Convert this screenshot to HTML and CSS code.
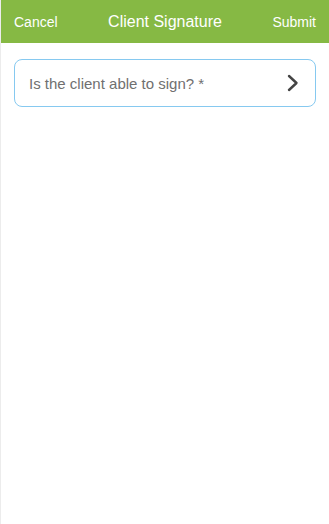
FILE: index.html
```html
<!DOCTYPE html>
<html>
<head>
<meta charset="utf-8">
<link rel="stylesheet" href="styles.css">
</head>
<body>
<div class="app">
  <header class="topbar">
    <span class="action">Cancel</span>
    <span class="title">Client Signature</span>
    <span class="action">Submit</span>
  </header>
  <main class="content">
    <div class="field">
      <span class="label">Is the client able to sign? *</span>
      <svg class="chev" width="12" height="18" viewBox="0 0 12 18"><path d="M2 2 L9.5 9 L2 16" fill="none" stroke="#444" stroke-width="2.4" stroke-linecap="round" stroke-linejoin="round"/></svg>
    </div>
  </main>
</div>
</body>
</html>
```
FILE: styles.css
```css
html, body { margin: 0; padding: 0; height: 100%; }
body { font-family: "Liberation Sans", Arial, sans-serif; background: #fff; }
.app { height: 100%; display: flex; flex-direction: column; border-left: 1px solid #ececec; box-sizing: border-box; }
.topbar {
  height: 43px; background: #86b944; display: flex; align-items: center;
  justify-content: space-between; padding: 0 13px 0 13px; color: #fff;
}
.action { font-size: 14px; }
.title { font-size: 16px; }
.content { padding: 16px 13px 0 13px; }
.field {
  height: 46px; border: 1.5px solid #86c9f0; border-radius: 8px;
  display: flex; align-items: center; justify-content: space-between;
  padding: 0 16px 0 14px;
}
.label { font-size: 15px; color: #707070; }
.chev { display: block; }
```
